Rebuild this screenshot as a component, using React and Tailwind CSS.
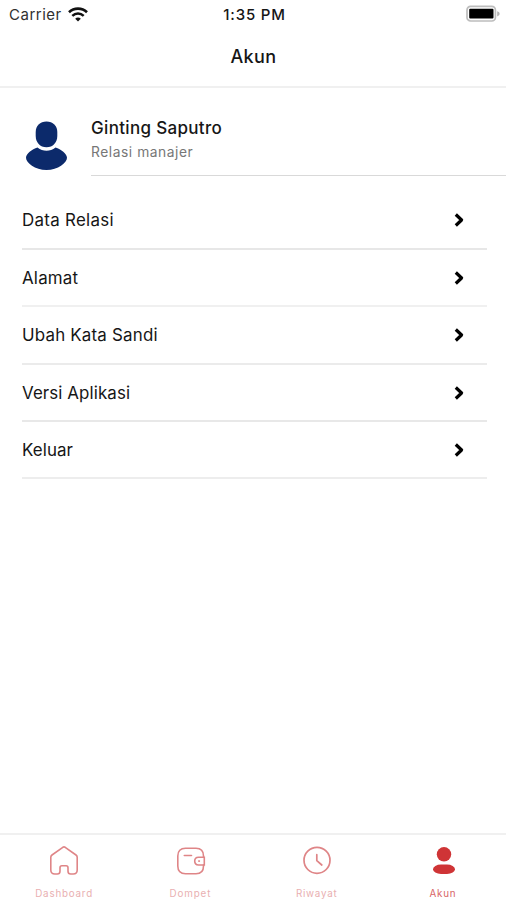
import React from "react";

const MENU = [
  { label: "Data Relasi", size: "h-[58px] border-[#e7e7e7]", track: "tracking-[0.3px]" },
  { label: "Alamat", size: "h-[57px] pt-px border-[#f0f0f0]", track: "tracking-[0.2px]" },
  { label: "Ubah Kata Sandi", size: "h-[58px] border-[#ebebeb]", track: "tracking-[0.2px]" },
  { label: "Versi Aplikasi", size: "h-[57px] border-[#e8e8e8]", track: "tracking-[0.1px]" },
  { label: "Keluar", size: "h-[57px] pt-px border-[#ededed]", track: "tracking-[0.1px]" },
];

function WifiIcon() {
  return (
    <svg width="20" height="15" viewBox="0 0 20 15" fill="none" stroke="#111" className="-mt-[2px] ml-[6px]">
      <path d="M1 5.2C6 .4 14 .4 19 5.2" strokeWidth="2.6" />
      <path d="M4.3 8.8c3.3-3.1 8.1-3.1 11.4 0" strokeWidth="2.5" />
      <path d="M10 14.4l-2.800-2.700c1.600-1.500 4-1.500 5.600 0z" fill="#111" stroke="none" />
    </svg>
  );
}

function BatteryIcon() {
  return (
    <svg width="34" height="18" viewBox="0 0 34 18" fill="none" className="-mt-[2px]">
      <rect x="1" y="1.400" width="28.400" height="14.600" rx="3.600" stroke="#bdbdbd" strokeWidth="1.700" />
      <rect x="3.200" y="3.800" width="24.300" height="9.800" rx="1" fill="#000" />
      <path d="M31.200 6.200c1.800.6 2.400 1.500 2.400 2.600s-.6 2-2.400 2.600z" fill="#b4b4b4" />
    </svg>
  );
}

function AvatarIcon() {
  return (
    <svg width="42" height="50" viewBox="0 0 42 50" fill="#0c2a6b">
      <path d="M20.500 .5C27 .5 31.300 5 31.300 11v4C31.300 21.300 27 26.300 20.500 26.300S9.700 21.300 9.700 15V11C9.700 5 14 .5 20.500 .5z" />
      <path d="M11.500 26.500c5.500 4.400 12.500 4.400 18 0C35 28 41 33 41 36.800c0 5-9 12.200-20.500 12.200S0 41.800 0 36.800c0-3.800 6-8.800 11.500-10.300z" />
    </svg>
  );
}

function Chevron() {
  return (
    <svg width="11" height="16" viewBox="0 0 11 16" fill="none" stroke="#000" strokeWidth="3.200" strokeLinejoin="round">
      <path d="M1.800 2.500L7.600 8l-5.800 5.500" />
    </svg>
  );
}

function HomeIcon() {
  return (
    <svg width="32" height="32" viewBox="0 0 32 32" fill="none" stroke="#df8587" strokeWidth="1.600" strokeLinejoin="round">
      <path d="M2.800 12.300c0-1 .4-1.700 1.200-2.300L14.800 2.300c.8-.5 1.600-.5 2.400 0L28 10c.8.6 1.200 1.300 1.200 2.300V25c0 2.700-1.500 4-4 4h-2.500c-1.700 0-2.700-1-2.700-2.700v-3.600c0-1.200-.7-1.900-1.900-1.900h-4.200c-1.200 0-1.900.7-1.900 1.900v3.600c0 1.700-1 2.700-2.700 2.700H6.800c-2.500 0-4-1.300-4-4z" />
    </svg>
  );
}

function WalletIcon() {
  return (
    <svg width="32" height="32" viewBox="0 0 32 32" fill="none" stroke="#df8587" strokeWidth="1.600" strokeLinecap="round" className="translate-x-px">
      <path d="M28.500 20v1c0 5-2.500 7.800-7.500 7.800H10.500c-5 0-7.700-2.800-7.700-7.800V11c0-5 2.700-7.700 7.700-7.700H21c5 0 7.500 2.700 7.500 7.700v1" />
      <path d="M29.300 12.200H23.500c-2.500 0-3.800 1.700-3.800 3.900s1.300 3.900 3.800 3.900h5.800zM23.800 16.100h.6M9.300 10.500h7.200" />
    </svg>
  );
}

function ClockIcon() {
  return (
    <svg width="32" height="32" viewBox="0 0 32 32" fill="none" stroke="#df8587" strokeWidth="1.700" strokeLinecap="round" strokeLinejoin="round">
      <circle cx="16" cy="15.300" r="13" />
      <path d="M15.800 9.700v6l5 4.300" />
    </svg>
  );
}

function AccountIcon() {
  return (
    <svg width="32" height="32" viewBox="0 0 32 32" fill="#cf3436" className="translate-x-px">
      <circle cx="16" cy="9.300" r="7.200" />
      <rect x="5" y="19.500" width="22" height="9.400" rx="8" ry="4.700" />
    </svg>
  );
}

const TABS = [
  { label: "Dashboard", Icon: HomeIcon, style: "text-[#e9afb1] tracking-[0.8px]" },
  { label: "Dompet", Icon: WalletIcon, style: "text-[#e9afb1] tracking-[0.9px]" },
  { label: "Riwayat", Icon: ClockIcon, style: "text-[#e9afb1] tracking-[0.75px]" },
  { label: "Akun", Icon: AccountIcon, style: "text-[#d86466] tracking-[0.7px]" },
];

export default function App() {
  return (
    <div className="flex h-[900px] w-[506px] flex-col overflow-hidden bg-white font-['Inter','Liberation_Sans',sans-serif] text-[#161616]">
      <header className="h-[88px] shrink-0 border-b-2 border-[#f0f0f0]">
        <div className="grid h-7 grid-cols-3 items-center pl-[9px] pr-[6px] pt-px">
          <div className="flex items-center pt-px text-[15px] tracking-[0.5px] text-[#303030]">
            Carrier
            <WifiIcon />
          </div>
          <div className="pt-px text-center text-[15px] font-medium tracking-[0.8px]">1:35 PM</div>
          <div className="flex justify-end">
            <BatteryIcon />
          </div>
        </div>
        <h1 className="flex h-[56px] items-center justify-center pl-px text-[18px] font-medium tracking-[0.4px]">Akun</h1>
      </header>

      <section className="flex h-[88px] shrink-0">
        <div className="w-[91px] pl-[26px] pt-[33px]">
          <AvatarIcon />
        </div>
        <div className="flex-1 border-b border-[#d9d9d9] pt-7">
          <div className="text-[17px] font-medium leading-6 tracking-[0.32px]">Ginting Saputro</div>
          <div className="text-[13.800px] leading-6 tracking-[0.55px] text-[#777]">Relasi manajer</div>
        </div>
      </section>

      <ul className="ml-[22px] mr-[19px] mt-4 flex-1">
        {MENU.map(({ label, size, track }) => (
          <li key={label} className={`flex items-center justify-between border-b-2 pr-[22px] text-[16.900px] ${size} ${track}`}>
            <span className="pt-[2px]">{label}</span>
            <Chevron />
          </li>
        ))}
      </ul>

      <nav className="grid h-[67px] shrink-0 grid-cols-4 border-t-2 border-[#f0f0f0] pl-px">
        {TABS.map(({ label, Icon, style }) => (
          <div key={label} className="flex flex-col items-center pt-[10px]">
            <Icon />
            <span className={`mt-[11px] text-[9.800px] leading-3 ${style}`}>{label}</span>
          </div>
        ))}
      </nav>
    </div>
  );
}
